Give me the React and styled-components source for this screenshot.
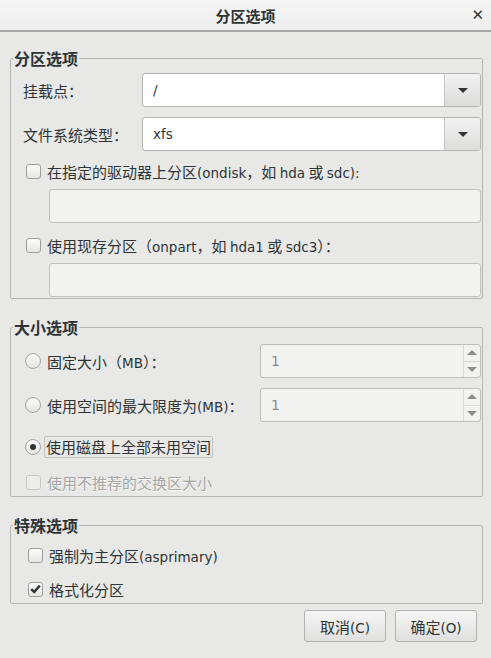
import React from 'react';
import styled, { createGlobalStyle } from 'styled-components';

const Global = createGlobalStyle`
  html, body {
    margin: 0;
    padding: 0;
    background: #e8e8e7;
  }
  body {
    font-family: "Noto Sans CJK SC", "DejaVu Sans", sans-serif;
    font-size: 15px;
    color: #2e3436;
  }
`;

const Window = styled.div`
  width: 491px;
  height: 658px;
  display: flex;
  flex-direction: column;
  background: #e8e8e7;
  overflow: hidden;
`;

const TitleBar = styled.div`
  height: 30px;
  flex: none;
  display: flex;
  align-items: center;
  justify-content: center;
  position: relative;
  background: linear-gradient(#f5f5f5, #eeeeee);
  border-bottom: 2px solid #a6a6a6;
  font-weight: bold;
  font-size: 15px;
  color: #2e3436;
`;

const Close = styled.span`
  position: absolute;
  right: 7px;
  top: 6px;
  font-family: "DejaVu Sans", sans-serif;
  font-size: 15px;
  font-weight: bold;
  color: #2e3436;
`;

const Body = styled.div`
  padding: 15px 8px 0 10px;
  display: flex;
  flex-direction: column;
`;

const Frame = styled.fieldset`
  margin: ${p => p.$top || 0}px 0 0 0;
  padding: 0 1px ${p => p.$pb || 0}px 0;
  border: 1px solid #b6b6b5;
  border-radius: 2px;
  min-width: 0;
`;

const Legend = styled.legend`
  margin-left: 2px;
  padding: 0 1px;
  font-weight: bold;
  font-size: 16px;
  line-height: 22px;
  color: #2e3436;
`;

const Row = styled.div`
  display: flex;
  align-items: center;
  height: ${p => p.$h || 34}px;
  margin-top: ${p => p.$mt || 0}px;
  padding-left: ${p => p.$pl || 0}px;
`;

const Label = styled.div`
  width: ${p => p.$w}px;
  flex: none;
  padding-left: 12px;
  box-sizing: border-box;
`;

const Latin = styled.span`
  font-family: "DejaVu Sans", sans-serif;
  font-size: 13.5px;
`;

const Combo = styled.div`
  flex: 1;
  height: 34px;
  box-sizing: border-box;
  display: flex;
  border: 1px solid #b4b4b3;
  border-radius: 3px;
  background: #ffffff;
  overflow: hidden;
`;

const ComboText = styled.div`
  flex: 1;
  display: flex;
  align-items: center;
  padding-left: 10px;
  font-family: "DejaVu Sans", sans-serif;
  font-size: 13.5px;
  color: #2e3436;
`;

const ComboButton = styled.div`
  width: 35px;
  flex: none;
  border-left: 1px solid #c4c4c3;
  background: linear-gradient(#f2f2f2, #dcdcdb);
  display: flex;
  align-items: center;
  justify-content: center;
`;

const Arrow = styled.span`
  width: 0;
  height: 0;
  border-left: 5px solid transparent;
  border-right: 5px solid transparent;
  border-${p => (p.$up ? 'bottom' : 'top')}: ${p => p.$size || 5}px solid ${p => p.$color || '#2e3436'};
`;

const Entry = styled.div`
  flex: 1;
  height: 34px;
  box-sizing: border-box;
  border: 1px solid #c2c2c1;
  border-radius: 3px;
  background: #f2f2f1;
  margin-left: 38px;
`;

const Box = styled.span`
  width: 15px;
  height: 15px;
  flex: none;
  box-sizing: border-box;
  border: 1px solid ${p => (p.$disabled ? '#c8c8c7' : '#9e9e9d')};
  border-radius: 3px;
  background: ${p => (p.$disabled ? '#ececeb' : 'linear-gradient(#fbfbfb, #e6e6e5)')};
  display: flex;
  align-items: center;
  justify-content: center;
  margin-right: 6px;
`;

const Radio = styled.span`
  width: 16px;
  height: 16px;
  flex: none;
  box-sizing: border-box;
  border: 1px solid #a4a4a3;
  border-radius: 50%;
  background: linear-gradient(#fbfbfb, #e4e4e3);
  display: flex;
  align-items: center;
  justify-content: center;
  margin-right: 6px;
`;

const Dot = styled.span`
  width: 6px;
  height: 6px;
  border-radius: 50%;
  background: #2e3436;
`;

const Text = styled.span`
  color: ${p => (p.$disabled ? '#a3a5a4' : '#2e3436')};
  text-shadow: ${p => (p.$disabled ? '0 1px #ffffff' : 'none')};
  white-space: nowrap;
`;

const Focused = styled.span`
  border: 1px solid #c3c3c2;
  border-radius: 2px;
  padding: 0 1px;
  margin-left: -3px;
  line-height: 20px;
  white-space: nowrap;
`;

const RadioLabel = styled.div`
  width: 249px;
  flex: none;
  display: flex;
  align-items: center;
  padding-left: 14px;
  box-sizing: border-box;
`;

const Spin = styled.div`
  flex: 1;
  height: 34px;
  box-sizing: border-box;
  display: flex;
  border: 1px solid #bdbdbc;
  border-radius: 3px;
  background: #f2f2f1;
  overflow: hidden;
`;

const SpinValue = styled.div`
  flex: 1;
  display: flex;
  align-items: center;
  padding-left: 10px;
  font-family: "DejaVu Sans", sans-serif;
  font-size: 14px;
  color: #8b8e8f;
`;

const SpinButtons = styled.div`
  width: 16px;
  flex: none;
  display: flex;
  flex-direction: column;
  border-left: 1px solid #dadad9;
`;

const SpinHalf = styled.div`
  flex: 1;
  display: flex;
  align-items: center;
  justify-content: center;
  & + & {
    border-top: 1px solid #dadad9;
  }
`;

const Footer = styled.div`
  display: flex;
  justify-content: flex-end;
  gap: 9px;
  padding: 6px 6px 0 0;
`;

const Button = styled.button`
  width: 82px;
  height: 32px;
  box-sizing: border-box;
  border: 1px solid #b2b2b1;
  border-radius: 3px;
  background: linear-gradient(#f6f6f6, #dfdfde);
  font-family: "Noto Sans CJK SC", "DejaVu Sans", sans-serif;
  font-size: 15px;
  color: #2e3436;
  padding: 0;
`;

function Check({ checked, disabled }) {
  return (
    <Box $disabled={disabled}>
      {checked && (
        <svg width="11" height="10" viewBox="0 0 11 10">
          <path d="M1.2 5.2 L4.2 8 L9.8 1.6" fill="none" stroke="#2e3436" strokeWidth="2.4" />
        </svg>
      )}
    </Box>
  );
}

function SpinBox({ value }) {
  return (
    <Spin>
      <SpinValue>{value}</SpinValue>
      <SpinButtons>
        <SpinHalf><Arrow $up $size={5} $color="#8b8e8f" /></SpinHalf>
        <SpinHalf><Arrow $size={5} $color="#8b8e8f" /></SpinHalf>
      </SpinButtons>
    </Spin>
  );
}

function ComboBox({ value }) {
  return (
    <Combo>
      <ComboText>{value}</ComboText>
      <ComboButton><Arrow /></ComboButton>
    </Combo>
  );
}

export default function App() {
  return (
    <Window>
      <Global />
      <TitleBar>
        分区选项
        <Close>✕</Close>
      </TitleBar>
      <Body>
        <Frame $pb={1}>
          <Legend>分区选项</Legend>
          <Row $mt={4}>
            <Label $w={131}>挂载点：</Label>
            <ComboBox value="/" />
          </Row>
          <Row $mt={10}>
            <Label $w={131}>文件系统类型：</Label>
            <ComboBox value="xfs" />
          </Row>
          <Row $h={22} $mt={9} $pl={15}>
            <Check />
            <Text>
              在指定的驱动器上分区<Latin>(ondisk</Latin>，如 <Latin>hda</Latin> 或 <Latin>sdc):</Latin>
            </Text>
          </Row>
          <Row $mt={7}>
            <Entry />
          </Row>
          <Row $h={22} $mt={11} $pl={15}>
            <Check />
            <Text>
              使用现存分区（<Latin>onpart</Latin>，如 <Latin>hda1</Latin> 或 <Latin>sdc3</Latin>）：
            </Text>
          </Row>
          <Row $mt={7}>
            <Entry />
          </Row>
        </Frame>

        <Frame $top={17} $pb={3}>
          <Legend>大小选项</Legend>
          <Row $mt={6}>
            <RadioLabel>
              <Radio />
              <Text>固定大小（<Latin>MB</Latin>）：</Text>
            </RadioLabel>
            <SpinBox value="1" />
          </Row>
          <Row $mt={10}>
            <RadioLabel>
              <Radio />
              <Text>使用空间的最大限度为<Latin>(MB)</Latin>：</Text>
            </RadioLabel>
            <SpinBox value="1" />
          </Row>
          <Row $h={22} $mt={14}>
            <RadioLabel>
              <Radio><Dot /></Radio>
              <Focused>使用磁盘上全部未用空间</Focused>
            </RadioLabel>
          </Row>
          <Row $h={22} $mt={13} $pl={15}>
            <Check disabled />
            <Text $disabled>使用不推荐的交换区大小</Text>
          </Row>
        </Frame>

        <Frame $top={17} $pb={3}>
          <Legend>特殊选项</Legend>
          <Row $h={22} $mt={8} $pl={17}>
            <Check />
            <Text>强制为主分区<Latin>(asprimary)</Latin></Text>
          </Row>
          <Row $h={22} $mt={12} $pl={17}>
            <Check checked />
            <Text>格式化分区</Text>
          </Row>
        </Frame>

        <Footer>
          <Button>取消<Latin>(C)</Latin></Button>
          <Button>确定<Latin>(O)</Latin></Button>
        </Footer>
      </Body>
    </Window>
  );
}
